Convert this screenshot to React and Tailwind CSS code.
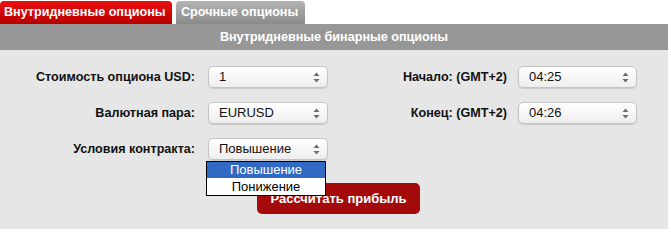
import React from "react";

function Arrows() {
  return (
    <svg width="7" height="11" viewBox="0 0 7 11" className="shrink-0">
      <path d="M3.5 0.5 L6.5 4 L0.5 4 Z" fill="#6b6b6b" />
      <path d="M3.5 10.5 L6.5 7 L0.5 7 Z" fill="#6b6b6b" />
    </svg>
  );
}

function Select({ value, w }) {
  return (
    <div
      className={`${w} h-[22px] flex items-center justify-between pl-[10px] pr-[7px] rounded-[5px] border border-[#c4c4c4] bg-gradient-to-b from-white to-[#eeeeee] shadow-[0_1px_1px_rgba(0,0,0,0.12)] text-[13px] text-[#111]`}
    >
      <span>{value}</span>
      <Arrows />
    </div>
  );
}

export default function App() {
  return (
    <div className="w-[671px] h-[229px] bg-white font-['Liberation_Sans',Arial,sans-serif] overflow-hidden">
      <div className="flex items-end gap-[4px] h-[24px]">
        <div className="h-[23px] w-[172px] pl-[4px] flex items-center rounded-t-[4px] bg-gradient-to-b from-[#ec1010] to-[#b80000] text-white font-bold text-[12.6px]">
          Внутридневные опционы
        </div>
        <div className="h-[23px] w-[129px] pl-[5px] flex items-center rounded-t-[4px] bg-gradient-to-b from-[#b4b4b4] to-[#8a8a8a] text-white font-bold text-[12.6px]">
          Срочные опционы
        </div>
      </div>
      <div className="mr-[3px]">
        <div className="h-[26px] bg-[#979797] flex items-center justify-center text-white font-bold text-[12.6px]">
          Внутридневные бинарные опционы
        </div>
        <div className="h-[179px] bg-[#e6e6e6] pt-[16px] relative">
          <div className="flex flex-col gap-[14px]">
            <div className="flex items-center">
              <div className="w-[195px] text-right font-bold text-[12.6px] text-[#111]">Стоимость опциона USD:</div>
              <div className="ml-[13px]"><Select value="1" w="w-[120px]" /></div>
              <div className="w-[179px] text-right font-bold text-[12.6px] text-[#111]">Начало: (GMT+2)</div>
              <div className="ml-[11px]"><Select value="04:25" w="w-[119px]" /></div>
            </div>
            <div className="flex items-center">
              <div className="w-[195px] text-right font-bold text-[12.6px] text-[#111]">Валютная пара:</div>
              <div className="ml-[13px]"><Select value="EURUSD" w="w-[120px]" /></div>
              <div className="w-[179px] text-right font-bold text-[12.6px] text-[#111]">Конец: (GMT+2)</div>
              <div className="ml-[11px]"><Select value="04:26" w="w-[119px]" /></div>
            </div>
            <div className="flex items-center">
              <div className="w-[195px] text-right font-bold text-[12.6px] text-[#111]">Условия контракта:</div>
              <div className="ml-[13px] relative">
                <Select value="Повышение" w="w-[120px]" />
                <div className="absolute left-[-2px] top-[23px] w-[120px] border border-black bg-white z-10 text-[13px]">
                  <div className="h-[16px] leading-[16px] bg-[#316ac5] text-white text-center">Повышение</div>
                  <div className="h-[17px] leading-[17px] text-black text-center">Понижение</div>
                </div>
              </div>
            </div>
          </div>
          <div className="ml-[257px] mt-[23px] w-[163px] h-[31px] rounded-[5px] bg-[#a50a0a] flex items-center justify-center text-white font-bold text-[13px]">
            Рассчитать прибыль
          </div>
        </div>
      </div>
    </div>
  );
}
